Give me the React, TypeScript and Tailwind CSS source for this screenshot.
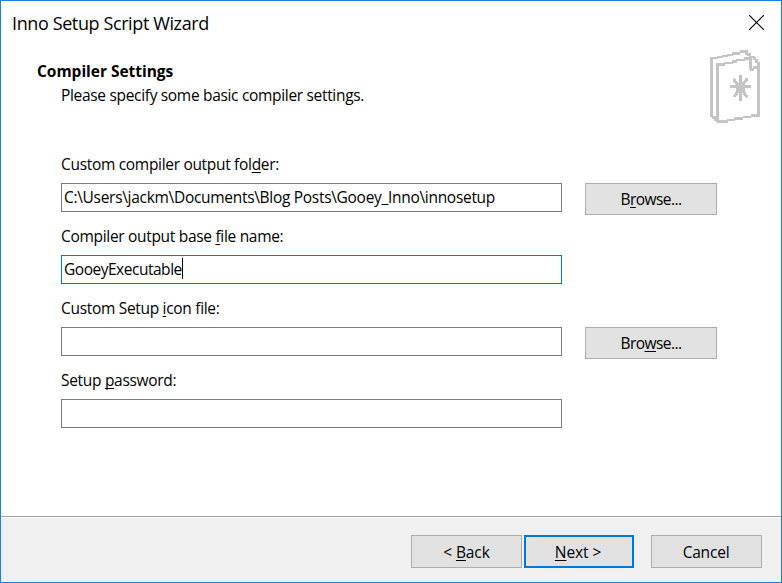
import type { ReactNode } from "react";

function Key({ children }: { children: ReactNode }) {
  return <span className="underline decoration-1 underline-offset-2 [text-decoration-skip-ink:none]">{children}</span>;
}

function Field({ label, value, action, focused = false }: { label: ReactNode; value?: ReactNode; action?: ReactNode; focused?: boolean }) {
  return (
    <div className="flex h-[72px] items-start">
      <div className="w-[501px]">
        <div className="h-6 whitespace-nowrap">{label}</div>
        <div className={`mt-[7px] flex h-[29px] items-start border bg-white pt-px pl-[2px] ${focused ? "border-[#0078d7]" : "border-[#7a7a7a]"}`}>
          {value}
          {focused && <span className="mt-px h-[21px] w-px bg-black" />}
        </div>
      </div>
      {action}
    </div>
  );
}

function BrowseButton({ children }: { children: ReactNode }) {
  return (
    <button className="mt-[31px] ml-[23px] h-8 w-[132px] border border-[#adadad] bg-[#e1e1e1] tracking-[-0.58px]">
      {children}
    </button>
  );
}

// Pixel runs that outline the two stacked sheets: x, y, width, height.
const sheetRuns = [
  [45, 51, 24, 6], [66, 48, 18, 6], [81, 45, 18, 6], [96, 42, 18, 6], [111, 36, 24, 9], [135, 30, 24, 9], [150, 30, 9, 15], [156, 39, 12, 9],
  [45, 51, 9, 180], [51, 228, 12, 9], [57, 234, 9, 9],
  [63, 69, 27, 9], [87, 66, 27, 6], [111, 60, 15, 9], [123, 57, 27, 6], [147, 51, 18, 9], [162, 48, 18, 6],
  [174, 51, 9, 9], [180, 57, 9, 12], [186, 66, 9, 162],
  [162, 51, 9, 36], [165, 84, 12, 9], [174, 78, 15, 9],
  [63, 69, 9, 177], [66, 240, 33, 9], [96, 237, 24, 6], [117, 231, 27, 9], [144, 228, 24, 6], [168, 222, 27, 9],
];

function SheetsIcon() {
  return (
    <svg width="80" height="90" viewBox="0 0 240 270" shapeRendering="crispEdges" className="text-[#c4c4c4]">
      {sheetRuns.map(([x, y, w, h]) => (
        <rect key={`${x}-${y}`} x={x} y={y} width={w} height={h} fill="currentColor" />
      ))}
      <g stroke="currentColor" strokeWidth="9" fill="currentColor">
        <path d="M136.500 105V182M105 139.500H168M115 117L157 171M157 115L117 171" />
        <path d="M122 129H150V156H122Z" stroke="none" />
      </g>
    </svg>
  );
}

export default function App() {
  return (
    <div className="flex h-[583px] w-[782px] flex-col border border-[#1883d7] bg-white font-['Open_Sans','Noto_Sans',sans-serif] text-[15.5px] leading-6 tracking-[-0.31px] text-black">
      <header className="flex h-[39px] shrink-0 items-start justify-between pl-[11px]">
        <h1 className="mt-[10px] text-[18px] tracking-[-0.39px] whitespace-nowrap">Inno Setup Script Wizard</h1>
        <svg className="mt-[14px] mr-[17px]" width="15" height="15" viewBox="0 0 15 15" stroke="#000" strokeWidth="1.1" fill="none">
          <path d="M0 0l15 15M15 0L0 15" />
        </svg>
      </header>
      <div className="flex h-[111px] shrink-0 justify-between pr-[6px]">
        <div className="pt-[19px] pl-[36px]">
          <h2 className="font-bold tracking-[-0.03px]">Compiler Settings</h2>
          <p className="pl-6 tracking-[-0.32px]">Please specify some basic compiler settings.</p>
        </div>
        <SheetsIcon />
      </div>
      <main className="flex-1 pt-px pl-[60px]">
        <Field
          label={<>Custom compiler output fol<Key>d</Key>er:</>}
          value={<span className="tracking-[-0.3px]">C:\Users\jackm\Documents\Blog Posts\Gooey_Inno\innosetup</span>}
          action={<BrowseButton>B<Key>r</Key>owse...</BrowseButton>}
        />
        <Field focused label={<>Compiler output base <Key>f</Key>ile name:</>} value={<span className="tracking-[-0.48px]">GooeyExecutable</span>} />
        <Field label={<>Custom Setup <Key>i</Key>con file:</>} action={<BrowseButton>Bro<Key>w</Key>se...</BrowseButton>} />
        <Field label={<>Setup <Key>p</Key>assword:</>} />
      </main>
      <footer className="flex h-[66px] shrink-0 border-t border-[#a0a0a0] bg-white pt-px">
        <div className="flex flex-1 items-start justify-end bg-[#f0f0f0] pt-[17px] pr-[19px] tracking-[-0.1px]">
          <button className="h-[33px] w-[111px] border border-[#adadad] bg-[#e1e1e1] pt-px">&lt; <Key>B</Key>ack</button>
          <button className="ml-[2px] h-[33px] w-[110px] border-2 border-[#0078d7] bg-[#e1e1e1] pt-px pr-[2px]"><Key>N</Key>ext &gt;</button>
          <button className="ml-[17px] h-[33px] w-[111px] border border-[#adadad] bg-[#e1e1e1] pt-px pr-px tracking-[-0.2px]">Cancel</button>
        </div>
      </footer>
    </div>
  );
}
